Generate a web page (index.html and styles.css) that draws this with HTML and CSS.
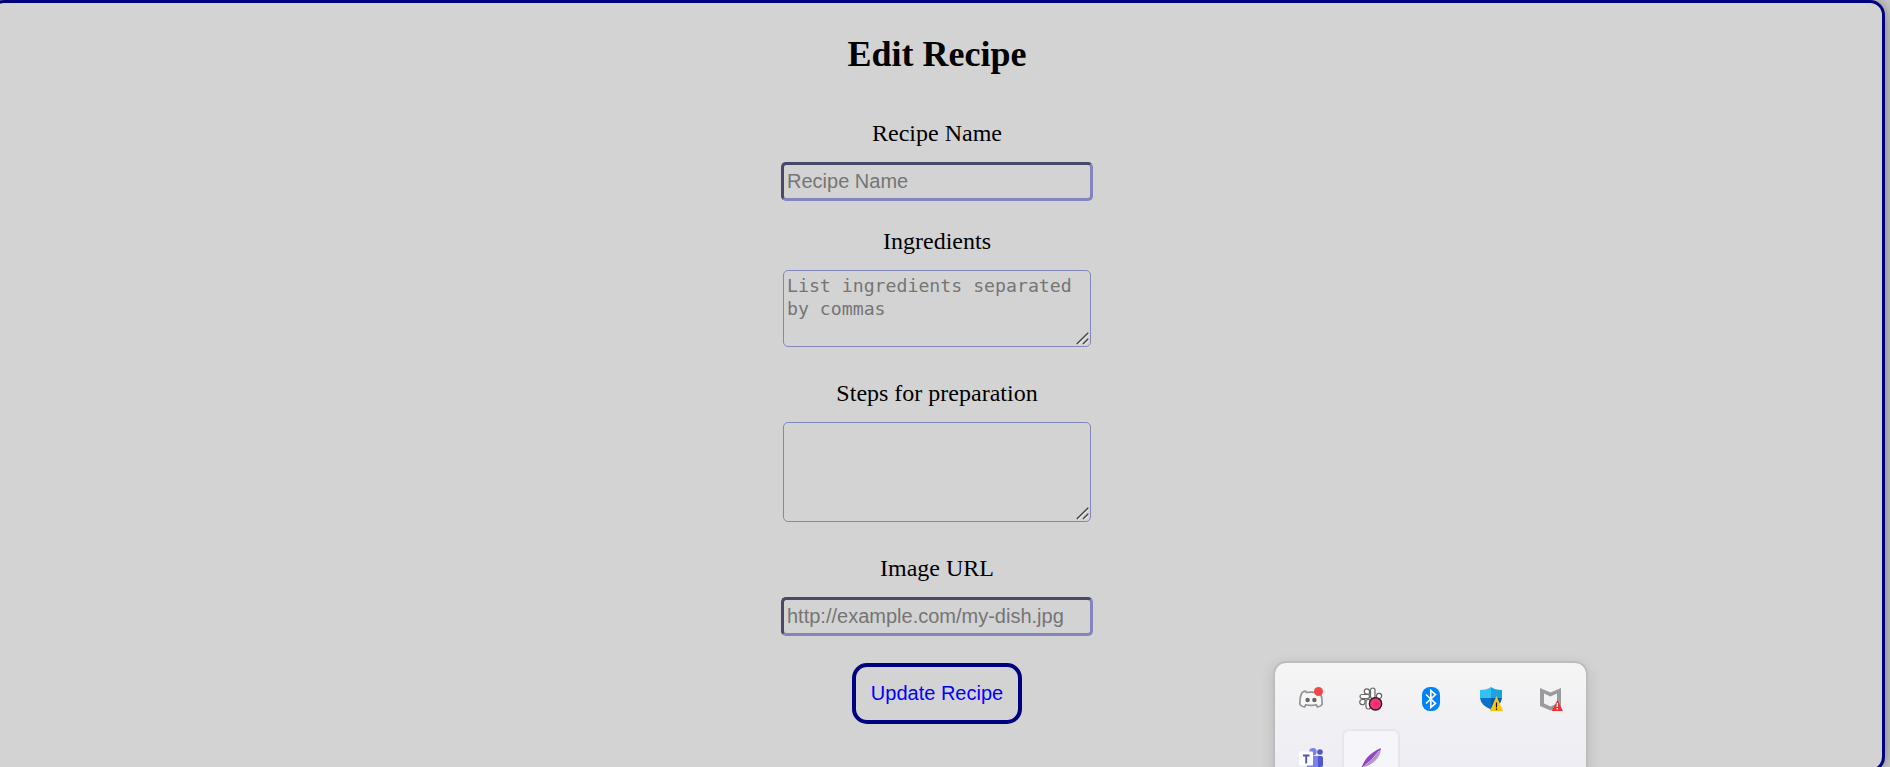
FILE: index.html
```html
<!DOCTYPE html>
<html lang="en">
<head>
<meta charset="utf-8">
<title>Edit Recipe</title>
<link rel="stylesheet" href="styles.css">
</head>
<body>
<main class="card">
  <h1 class="title">Edit Recipe</h1>
  <form class="form">
    <div class="field">
      <label class="label" for="name">Recipe Name</label>
      <input class="input" id="name" type="text" placeholder="Recipe Name">
    </div>
    <div class="field field-area">
      <label class="label" for="ingredients">Ingredients</label>
      <div class="area-wrap">
        <textarea class="area" id="ingredients" placeholder="List ingredients separated by commas"></textarea>
        <svg class="grip" viewBox="0 0 13 13"><path d="M2 12.500L13 1.500M8 12.500L13 7.500" stroke="#f0f0f0" stroke-width="1.500"/><path d="M.8 12L12.300.8M7 12L12.300 6.800" stroke="#444" stroke-width="1.500"/></svg>
      </div>
    </div>
    <div class="field field-area">
      <label class="label" for="steps">Steps for preparation</label>
      <div class="area-wrap">
        <textarea class="area area-tall" id="steps"></textarea>
        <svg class="grip" viewBox="0 0 13 13"><path d="M2 12.500L13 1.500M8 12.500L13 7.500" stroke="#f0f0f0" stroke-width="1.500"/><path d="M.8 12L12.300.8M7 12L12.300 6.800" stroke="#444" stroke-width="1.500"/></svg>
      </div>
    </div>
    <div class="field">
      <label class="label" for="image">Image URL</label>
      <input class="input" id="image" type="text" placeholder="http://example.com/my-dish.jpg">
    </div>
    <button class="submit" type="button">Update Recipe</button>
  </form>
</main>
<aside class="tray">
  <div class="slot">
    <svg class="icon" viewBox="0 0 24 24">
      <path d="M6.500 4.200C5 4.400 3.600 5 2.800 6C1.500 8.500.7 13 .9 17.500c1.300 1.500 3 2.200 4.600 2.500l1.300-2.200q5.200 1.300 10.400 0l1.300 2.200c1.600-.3 3.300-1 4.600-2.500.2-4.500-.6-9-1.900-11.500-.8-1-2.200-1.600-3.700-1.800l-1 1.300q-4.500-.6-9 0z" fill="#f7f7f7" stroke="#929292" stroke-width="1.700"/>
      <circle cx="8.600" cy="13" r="2.200" fill="#666"/><circle cx="15.400" cy="13" r="2.200" fill="#666"/>
      <circle cx="19.500" cy="4.500" r="4.500" fill="#f04747"/>
    </svg>
  </div>
  <div class="slot">
    <svg class="icon" viewBox="0 0 24 24">
      <g fill="#fff" stroke="#666" stroke-width="1.200">
        <path d="M10.500 7H7.800A2.600 2.600 0 1 1 10.500 4.400z"/>
        <rect x="1" y="7.500" width="9.500" height="4" rx="2"/>
        <rect x="11.500" y="1" width="4.500" height="10.500" rx="2.200"/>
        <path d="M17.500 11.500V8.500A2.600 2.600 0 1 1 20 11.500z"/>
        <rect x="12" y="12.500" width="10" height="4.500" rx="2"/>
        <path d="M6 12.500v2.700a2.600 2.600 0 1 1-2.600-2.700z"/>
        <rect x="7" y="12.500" width="4.500" height="9.500" rx="2.200"/>
      </g>
      <circle cx="16.500" cy="16.800" r="6.200" fill="#f7317a" stroke="#281720" stroke-width="1.300"/>
    </svg>
  </div>
  <div class="slot">
    <svg class="icon" viewBox="0 0 24 24">
      <rect x="3" width="18" height="24" rx="8" fill="#0082fc"/>
      <path d="M7 7.500l9.500 9L11.800 20.500V3.500l4.700 4L7 16.500" fill="none" stroke="#fff" stroke-width="1.700"/>
    </svg>
  </div>
  <div class="slot">
    <svg class="icon" viewBox="0 0 24 24">
      <path d="M1 3Q8 3 12 0V11H1z" fill="#35c1f1"/>
      <path d="M12 0q4 3 11 3V11H12z" fill="#1aa4e2"/>
      <path d="M1 11h11v11.500Q2 18.500 1 11z" fill="#0c70c4"/>
      <path d="M12 11h11q-1 7.500-11 11.500z" fill="#0759ad"/>
      <path d="M17.500 9L24 24H11z" fill="#ffc20e"/>
      <path d="M17.500 15.500v5M17.500 21.500v1.500" stroke="#111" stroke-width="1.200"/>
    </svg>
  </div>
  <div class="slot">
    <svg class="icon" viewBox="0 0 24 24">
      <path d="M1 1l10.500 4.500L22 1v18l-10.500 4.500L1 19zM5 6.500v10l6.500 3 6.500-3v-10l-6.500 3z" fill="#999b9d" fill-rule="evenodd"/>
      <path d="M18.500 13L24 24H12.500z" fill="#ee3338"/>
      <path d="M18.300 16v4M18.300 21v1.500" stroke="#fff" stroke-width="1.300"/>
    </svg>
  </div>
  <div class="slot">
    <svg class="icon" viewBox="0 0 24 24">
      <circle cx="14" cy="3.700" r="3.700" fill="#7b83eb"/><circle cx="21" cy="4" r="2.800" fill="#5059c9"/>
      <rect x="17" y="8" width="7" height="11" rx="2" fill="#5059c9"/>
      <path d="M8 8h11v10a6 6 0 0 1-11 3z" fill="#7b83eb"/>
      <rect y="3.500" width="14" height="14" rx="1" fill="#fff"/>
      <path d="M4 7.500h6.500M7.200 7.500v8" stroke="#4b53bc" stroke-width="1.800"/>
    </svg>
  </div>
  <div class="slot slot-active">
    <svg class="icon" viewBox="0 0 24 24">
      <path d="M2 22C7 9 12 5 22 0C22 8 16 16 5 19z" fill="#b79bd5"/>
      <path d="M2 22C5 10 12 5 22 0C18 9 11 14 2 22z" fill="#9147bd"/>
      <path d="M3 20Q14 12 20 3" fill="none" stroke="#d9c7e9" stroke-width="1"/>
    </svg>
  </div>
</aside>
</body>
</html>
```
FILE: styles.css
```css
html, body {
  height: 100%;
  margin: 0;
  overflow: hidden;
  background: lightgray;
}
body {
  position: relative;
  font-family: "Liberation Serif", "Times New Roman", serif;
  color: #000;
}
.card {
  box-sizing: border-box;
  width: 1896px;
  height: 772px;
  margin-left: -11px;
  padding-top: 31px;
  border: 3px solid navy;
  border-radius: 15px;
  background: lightgray;
  box-shadow: 0 0 20px rgba(0, 0, 0, 0.5);
}
.title {
  margin: 0 0 45px;
  font-size: 36px;
  line-height: 40px;
  text-align: center;
}
.form {
  display: flex;
  flex-direction: column;
  align-items: center;
}
.field {
  display: flex;
  flex-direction: column;
  align-items: center;
  gap: 15px;
  margin-bottom: 26px;
}
.field-area {
  margin-bottom: 32px;
}
.label {
  font-size: 24px;
  line-height: 28px;
}
.input {
  box-sizing: border-box;
  width: 312px;
  height: 39px;
  padding: 1px 3px;
  border: 3px solid #8585bd;
  border-top-color: #484868;
  border-left-color: #484868;
  border-radius: 5px;
  background: transparent;
  font: 20px "Liberation Sans", Arial, sans-serif;
}
.area-wrap {
  position: relative;
  display: flex;
}
.area {
  box-sizing: border-box;
  width: 308px;
  height: 77px;
  margin: 0;
  padding: 3px;
  border: 1px solid #8585bd;
  border-radius: 5px;
  background: transparent;
  font: 18.200px/23.400px "DejaVu Sans Mono", monospace;
  overflow: hidden;
  resize: none;
}
.area-tall {
  height: 100px;
}
.grip {
  position: absolute;
  right: 2px;
  bottom: 2px;
  width: 13px;
  height: 13px;
}
.input::placeholder, .area::placeholder {
  color: #757575;
}
.submit {
  box-sizing: border-box;
  width: 170px;
  height: 61px;
  margin-top: 1px;
  padding: 0;
  border: 4px solid navy;
  border-radius: 15px;
  background: transparent;
  color: blue;
  font: 20px "Liberation Sans", Arial, sans-serif;
}
.tray {
  position: absolute;
  top: 661px;
  left: 1273px;
  box-sizing: border-box;
  width: 315px;
  height: 130px;
  padding: 5px 6px;
  display: grid;
  grid-template-columns: repeat(5, 60px);
  grid-auto-rows: 61px;
  border: 2px solid #bdbdbd;
  border-radius: 13px;
  background: linear-gradient(#f5f5f5, #ececf3 90%);
  background-clip: padding-box;
  box-shadow: 0 4px 14px rgba(0, 0, 0, 0.12);
}
.slot {
  box-sizing: border-box;
  display: flex;
  align-items: center;
  justify-content: center;
  margin: 0 1px;
}
.slot-active {
  border: 2px solid #e7e7eb;
  border-radius: 7px;
  background: #f6f6fa;
}
.icon {
  width: 24px;
  height: 24px;
}
```
